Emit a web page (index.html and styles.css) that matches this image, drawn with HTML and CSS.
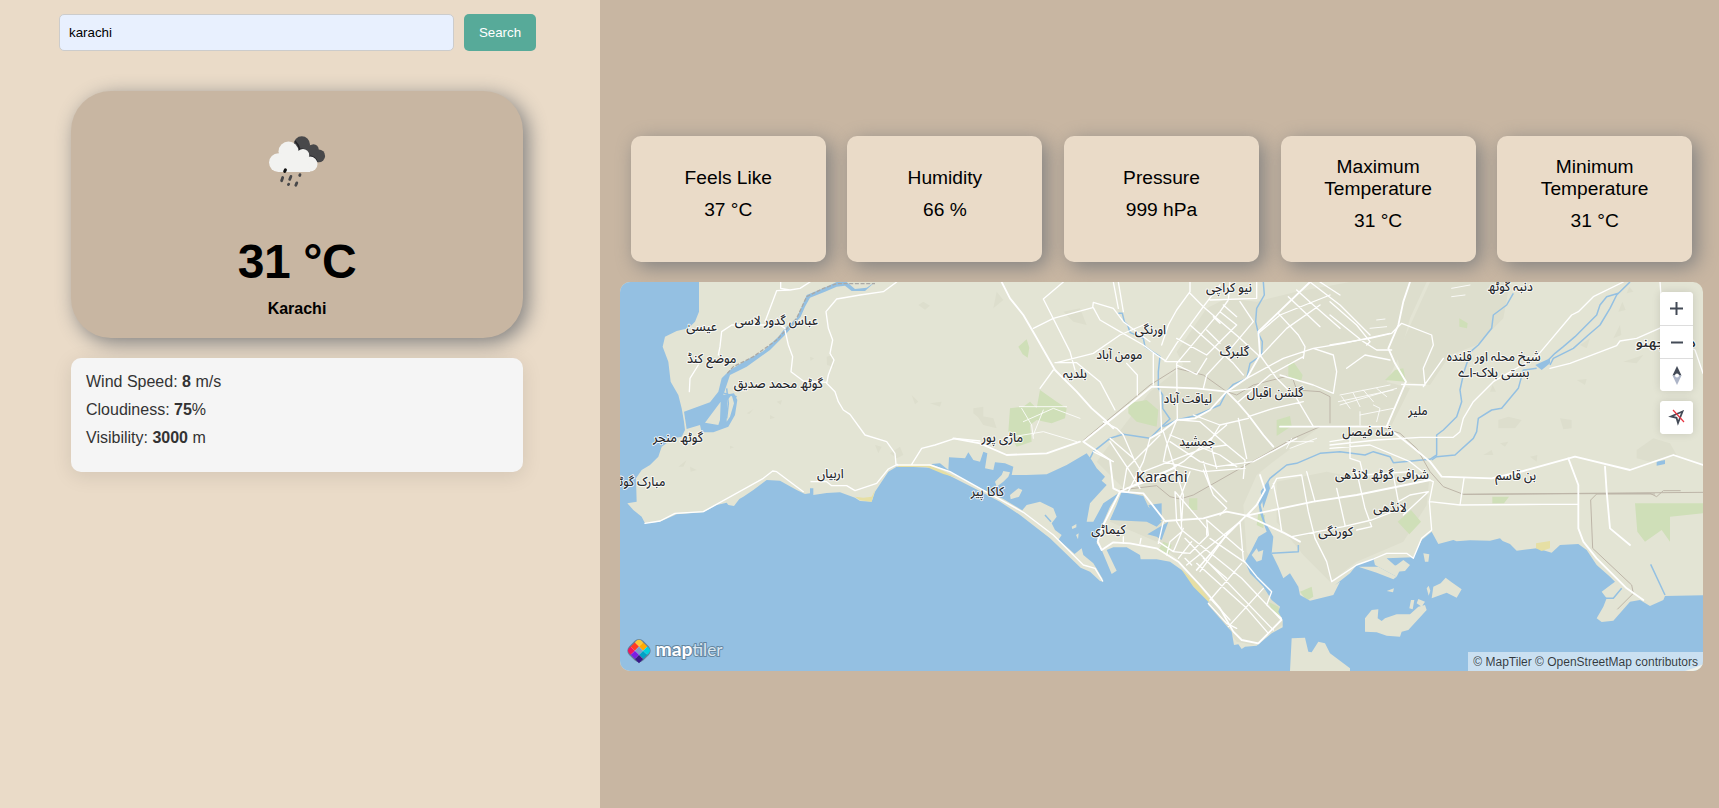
FILE: index.html
```html
<!DOCTYPE html>
<html lang="en">
<head>
<meta charset="utf-8">
<title>Weather</title>
<link rel="stylesheet" href="styles.css">
</head>
<body>
<div class="app">
  <aside class="sidebar">
    <form class="search">
      <input class="search-input" type="text" value="karachi">
      <button class="search-button" type="button">Search</button>
    </form>
    <section class="current">
      <svg class="weather-icon" viewBox="0 0 100 100">
        <g fill="#48484a"><circle cx="54.800" cy="33.500" r="8.200"/><circle cx="66.500" cy="38.500" r="5.200"/><circle cx="71.700" cy="44.900" r="6.400"/><path d="M50 35L68 34L72 51.300L60 48Z"/></g>
        <path d="M48 30Q52 34 52.800 38.500Q60 37 62 45Q68 45.500 70 50.500" fill="none" stroke="#222226" stroke-width="1.400"/>
        <g fill="#f2f2f0"><circle cx="41.500" cy="40.500" r="10"/><circle cx="31.300" cy="51.600" r="9.300"/><circle cx="56" cy="44.200" r="6.200"/><circle cx="63" cy="53" r="7.500"/><path d="M31 60.900V48L40 40H52L60 48L63 60.500V60.900Z"/></g>
        <path d="M38.400 58.900l-.700 1.500" stroke="#111" stroke-width="3" stroke-linecap="round"/>
        <path d="M35.700 66.500l-1.100 3.200M43.900 65.400l-1.200 3M53 63.600l-.3.900M41.700 73.100l-.3.500M49.800 71.900l-1 2.300" stroke="#48484a" stroke-width="2.800" stroke-linecap="round"/>
      </svg>
      <h1 class="temperature">31 °C</h1>
      <p class="city">Karachi</p>
    </section>
    <section class="details">
      <p>Wind Speed: <b>8</b> m/s</p>
      <p>Cloudiness: <b>75</b>%</p>
      <p>Visibility: <b>3000</b> m</p>
    </section>
  </aside>
  <main class="content">
    <div class="stats">
      <div class="stat"><h3>Feels Like</h3><p>37 °C</p></div>
      <div class="stat"><h3>Humidity</h3><p>66 %</p></div>
      <div class="stat"><h3>Pressure</h3><p>999 hPa</p></div>
      <div class="stat"><h3>Maximum Temperature</h3><p>31 °C</p></div>
      <div class="stat"><h3>Minimum Temperature</h3><p>31 °C</p></div>
    </div>
    <div class="map">
      <svg class="map-canvas" viewBox="30 21 3249 1167">
        <!-- built-up areas -->
        <g class="urban">
          <path d="M1520 480L1620 350L1720 270L1700 230L1790 100L1850 70L1940 80L2060 50L2220 21H2450L2400 130L2370 240L2330 320L2400 340L2330 480L2250 450L2130 455L1990 560L1940 600L1900 690L1910 830L2010 1000L2018 1050L1930 1110L1880 1100L1790 980L1700 850L1640 800L1500 740L1540 640L1460 560Z"/>
          <path d="M2460 21H2700L2680 130L2600 210L2520 240L2460 330L2380 320L2360 240Z"/>
          <path d="M2000 620L2150 590L2250 610L2460 590L2450 690L2380 800L2240 860L2160 920L2080 840L2000 740Z"/>
          <path d="M1160 50L1180 75L1150 100ZM925 90l15-10 20 12-15 12zM905 360l20 20-10 8zM960 385l35-5-5 15zM1090 400l30-5v45l-30-25zM795 510l20 5-10 20zM840 535l30-20 10 25-20 10zM650 245l18-5 3 35-20-5zM600 245l12 5-10 8zM205 575l25-20-10 20zM240 575l20 10-18 5zM410 415l20-12-12 14zM480 420l15 8-15 4zM500 380l16-5-4 14zM360 512l12 5-12 4zM1100 420l50 10 10 30-40-10zM1360 110l50-10 20 50-40-10z"/>
          <path d="M2665 435l30-10 40 10-20 25-50 0zM2850 430l35 5v25l-25 3zM2900 315l30-3-5 18zM3080 525l50-35 50 15 20 35-80 20-40-10zM2620 540l25-15 5 15zM2670 505l25-5-10 15zM2760 545l22-5-2 20zM3050 55l8-20 12 15zM3025 110l12-30 10 25zM3010 190l20-40 4 30zM2910 210l30-20-10 30zM3040 260l60-20-20 25zM2640 350l8-20 10 20z"/>
        </g>
        <!-- parks -->
        <g class="park">
          <path d="M1200 400L1240 395L1260 380L1280 400L1290 345L1340 380L1370 400L1365 430L1325 445L1280 435L1260 450L1265 500L1220 515L1195 470ZM1225 215l25-22 8 25-5 30-15-10zM1555 385l55-10 35 30-5 50-60-15-25-25zM2035 265l15-5 28 40-5 20-38-10zM2000 435l40-12 5 30-45 30zM2325 315l30-30 25-5 8 40zM2548 130l25 15-2 15-23-5zM1737 670h25v35h-25zM1660 800l25 10-10 30-30-15zM1945 715l20 5-5 40-20-10zM2070 950l35-15 5 30-20 12zM1975 980l30 15 8 30-25-15z"/>
          <path d="M2363 740l40-35 30 35-35 38zM2647 665h50l-15 20h-35zM3075 685H3279V715L3180 725V800L3155 765L3105 800L3082 770Z"/>
        </g>
        <path class="sea" d="M30 21H267V110L255 140L235 160L200 168L165 185L158 215L175 260L182 320L205 360L215 400L222 440L225 465L215 485L190 490L155 515L145 545L120 570L95 585L78 610L80 680L52 685L70 705L95 725L105 745L150 740L200 718L280 712L320 690L350 683L355 690L372 693L388 672L400 665L430 645L470 615L510 617L560 645L585 657L600 655V640L610 640V660L650 654L690 652L735 668L750 678L785 680L795 650L815 620L835 590L860 575L960 575L965 567L990 565L1015 585L1017 547L1065 550L1075 532L1090 555L1110 560L1120 530L1132 535L1125 580L1150 585L1155 562L1185 565L1210 575L1205 600L1250 600L1310 598L1370 570L1430 535L1445 555L1460 580L1485 605L1475 617L1490 630L1440 685L1430 740L1450 740L1480 685L1525 655L1500 695L1465 775L1460 805L1475 825L1505 897L1520 887L1490 825L1510 817L1550 817L1590 840L1592 853L1640 853L1680 860L1715 885L1760 930L1795 975V990L1865 1070L1872 1110L1885 1108L1895 1122L1905 1115L1940 1112L1985 1075L2018 1057V1035L2005 1010L2010 995L1985 975L1960 935L1920 895L1905 860L1925 825L1945 785L1970 770L1950 715L1945 685L1960 640L1972 650L1952 690L1965 740L1990 785L1985 835L2005 875L2020 910L2040 895L2065 935L2070 960L2100 977L2170 960L2190 920L2175 930L2220 895L2240 870L2290 850L2295 870L2360 905L2370 885L2330 850L2410 847L2435 795L2465 770L2485 807L2530 795L2540 799L2580 796L2640 797L2670 790L2678 798L2700 807L2720 827L2780 820L2825 833L2850 810L2905 807L2930 825L2960 870L3000 905L3015 920L2975 950L2990 970L2980 995L2960 1030L2975 1041L3010 1037L3060 980L3090 975L3120 993L3160 975L3165 963L3279 961V1188H30Z"/>
        <g class="sea">
          <path d="M222 410L300 382L325 350L335 310L360 285L410 255L460 228L505 185L525 160L560 130L575 95L590 60L640 40L680 21L710 21L735 42L770 38L795 21L765 48L725 48L705 32L680 35L645 50L600 68L585 95L572 125L530 175L480 225L410 275L360 300L350 330L340 360L372 355L382 375L375 420L355 455L310 472L275 472L270 450L230 462Z"/>
          <path d="M1535 650L1600 663L1615 695L1655 740L1640 755L1610 740L1500 735L1520 690ZM1615 690L1655 685V735L1635 735ZM1612 778L1675 740L1655 795L1640 785Z"/>
          <path d="M2776 270L2820 250V265L2795 285ZM3140 560l25-5v12l-25 5zM1952 650L1975 620L1980 640L1960 700Z"/>
        </g>
        <!-- islands and the coastal spit -->
        <g class="land">
          <path d="M332 380L330 435L325 450L285 443ZM352 375L365 360L372 385L360 425L350 440Z"/>
          <path d="M860 566H960L1020 590L1110 640L1180 672L1240 708L1330 780L1420 860L1458 878L1480 920L1470 918L1440 890L1412 878L1320 790L1230 720L1170 680L1090 638L1010 598L960 578L860 574Z"/>
          <path d="M1235 708L1250 690L1290 680L1330 700L1340 725L1325 745L1335 765L1355 780L1345 795L1300 765ZM1390 840L1415 820L1420 840L1450 865L1480 915L1440 880ZM1155 620L1175 600L1180 588L1200 592L1195 605L1180 620L1160 635ZM1200 660l25-20 12 5-10 20-25 8zM1385 755l14-8v10l-12 5zM1398 780l8-5-2 18zM1235 588l30-3h35l-20 5z"/>
          <path d="M1925 840l15-20 5 10 15-5-5 30-15 5zM2040 1188L2045 1090L2085 1088L2095 1130L2105 1132L2125 1100L2145 1105L2160 1135L2220 1180V1188Z"/>
          <path d="M2265 1070V1030L2285 1005L2305 1003L2303 1030L2315 1038L2325 1030L2360 1018H2400L2425 995L2445 990L2450 1005L2395 1065L2375 1070L2370 1085L2330 1082L2300 1072ZM2398 1000l5-25 10 0-5 28zM2420 985l5-13 20 8-10 15zM2465 970l5-35 22-10 15-17 20 15 28 20-15 25-30-15zM2450 940l6-8 5 15-5 15zM2335 880l25-10 20-15 20 15-15 18-25 2zM2330 948l22-8-3 12zM2440 835l18 3-3 22-10 0zM2245 875l60 0 55 30-10 8-50-20zM3225 1188l25-8 29-12v20z"/>
        </g>
        <path class="sand" d="M735 665L750 676L785 680L795 645L785 665L760 668ZM865 568H950L1000 588L1040 608L1000 597L950 576H865ZM1712 880L1760 925L1800 975L1795 980L1750 935ZM2778 805L2820 798V820L2795 828L2778 820Z"/>
        <g class="stream">
          <path d="M1525 115L1537 115L1543 140L1553 150L1560 172L1600 190L1605 215L1650 245L1645 290V340L1658 360V400L1680 432L1660 450L1620 490L1540 478L1500 490L1450 530L1440 550"/>
          <path d="M1960 21L1963 60L1940 100L1937 140L1945 175L1957 200L1955 240L1920 265L1910 310L1870 328L1850 350L1830 390L1755 422L1700 435L1660 455"/>
          <path d="M2710 55L2690 90L2650 120L2645 160L2605 210L2582 230L2562 290L2550 345L2555 380L2540 425L2500 465L2480 480L2480 540L2460 553L2350 563L2340 545L2290 530L2265 540L2190 530L2130 535L2060 565L2030 570L1980 610L1955 650"/>
          <path d="M3060 21L3020 60L3000 100L2970 150L2935 180L2890 220L2830 250L2820 270M3025 55L2990 65L2970 90L2960 120L2930 150L2895 185L2860 215L2835 235L2815 255M2780 280L2740 285L2725 340L2700 370L2675 400L2645 405L2605 430L2600 470L2590 490L2535 540L2480 545L2465 555"/>
          <path d="M3122 868L3165 960M3035 940L3010 970H2980M1985 835L2065 830V810M1305 720l18 20M350 340L355 385L350 430M342 355L380 365"/>
        </g>
        <g class="rail">
          <path d="M1420 496L1620 330L1700 280L1780 300L1850 350L1880 360L1930 330L2030 304L2050 315L2060 345L2130 350L2160 365V445M2050 490L1900 575L1750 660L1710 672L1680 665L1640 632L1530 645M2050 490L2130 455L2310 455L2370 475L2420 520L2460 590L2500 635L2560 658L3120 655L3140 665L3160 647H3212M2560 658L3279 652M3135 657H2960L2942 675L2948 820L3065 930L3070 955L3022 1003"/>
        </g>
        <path class="border" d="M352 295L370 275L430 245L500 195L560 130L590 65L640 40L680 26H795"/>
        <!-- main roads -->
        <g class="road major">
          <path d="M1175 21L1200 70L1240 120L1275 180L1335 285L1400 350L1445 400L1485 435L1510 460"/>
          <path d="M1420 500L1625 335L1760 340L1850 350L1885 385L1915 420L1960 480L1990 515M1420 500L1500 555L1510 640L1530 650L1600 655L1665 738L1780 730L1850 710L1910 722L2025 775L2070 800"/>
          <path d="M2100 21L1945 170L1950 240L1910 310L1850 350L1800 405L1755 430L1700 435L1655 470L1620 490M1530 650L1475 760L1463 800L1475 825L1510 802L1560 805L1640 820L1705 860L1770 930L1830 1000L1870 1070L1895 1095L1945 1105L2014 1035M2010 455L2110 455L2330 455L2400 510L2460 560L2495 605L2645 610L2740 588L2895 545L3060 585L3190 540L3279 570"/>
          <path d="M2400 21L2380 80L2365 150L2335 220L2355 265L2388 320L2330 455M2875 550L2905 630L2905 760L2920 800L2960 850L3050 940L3100 975M2985 575L2990 650L3000 760L3060 810M1410 500L1310 535L1190 540L1110 505L1030 490"/>
          <path d="M1905 725L1850 780L1760 885M1910 722L2110 680L2240 660L2460 615M1950 600L1965 645L1940 690L1910 722M1530 650L1640 600L1690 580L1700 570"/>
        </g>
        <g class="road">
          <path d="M860 570H960L1020 590L1110 640L1240 712L1330 780L1420 870L1455 880L1478 918M905 568L935 520L975 510L1035 490L1110 498M858 568L855 535L830 500L765 480L720 418L700 405L685 380L675 350L650 325L655 300L672 255L660 235L668 195L655 160L648 110L680 72L750 60L820 50L860 21M862 568L835 582L800 625L735 647L710 632H665L650 620L603 620M580 650L500 590L488 588L460 610L280 710L195 715L150 738L105 745M525 165L535 210L548 245L543 290L580 318L650 322M525 160L510 150H365L335 170L330 215L325 240M265 270L240 310L238 350M600 21L570 40L540 45L500 47L465 140M512 21V40L540 45"/>
          <path d="M1360 21L1300 72L1380 230L1395 285M1270 160L1330 130L1448 98L1450 82L1510 100L1540 140L1620 200M1450 98L1470 135L1530 170L1600 210L1640 240L1670 260L1740 260M1340 263L1450 235L1530 180L1600 150M1510 21L1525 100M1525 21L1540 110M1330 285L1290 340M1335 263H1400L1470 320L1515 405M1480 440L1520 460L1540 480M1550 265L1582 300V360M1630 235V330M1650 345L1655 470M1700 265L1702 435M1740 21V50L1700 105L1675 150L1655 210M1740 55L1780 95L1830 30M1780 95L1700 205L1665 260M1780 95L1890 190L1950 245M1860 21L1855 75L1830 110L1700 265M1940 21V70L1800 75M1890 80L1930 140L1850 235L1790 300L1780 340M1830 110L1880 150L1790 240L1700 190M1740 150L1870 265L1900 300M1810 125L1830 145M1840 90L1880 125M1790 165L1830 205M1700 270L1760 298L1790 250"/>
          <path d="M2005 115L2065 180L2085 215L2080 250M2035 65L2130 155M2060 45L2110 90L2190 160M2100 21L2190 90L2280 180M2130 21L2190 60M1945 175L2010 120L2160 60M1950 245L2030 160L2130 90M1910 310L2020 250L2110 220L2200 205L2340 175M1885 380L1980 300L2080 245M1950 240L2000 310L2060 370L2110 455M2010 300L2110 330L2170 355L2180 290L2170 240L2110 220M1915 425L1990 400L2080 380M1850 350L1930 340M1710 435L1770 440L1850 510L1905 555L1900 610M1750 420L1830 450L1915 430M1830 450L1800 500L1820 580M1885 430L1910 550M1700 435L1670 510L1660 560M1660 470L1720 660L1715 740M1650 480L1550 580L1540 640M1620 490L1600 560L1555 650M1540 480L1575 560M1500 500L1560 590L1590 640M1450 530L1510 560M1500 490L1570 550L1600 600M1680 480L1830 540L1880 575M1680 500L1770 560L1820 575L1930 560L2060 490M1660 560L1780 590L1905 580M1780 560L1800 630L1850 680M1600 590L1780 520L1850 510M1620 620L1720 560L1850 450M1550 640L1700 590M1740 590L1710 670L1715 760M1780 585L1810 660L1850 700L1830 720"/>
          <path d="M1715 765L1700 740L1695 650L1730 690L1790 760V780M1715 765L1895 910L2014 1035M1725 790L1990 1065M1790 735L1900 830M1890 740L1900 855L1940 905L1985 950L1970 990L2014 1030M1890 740L1730 870M1860 765L1770 890M1895 865L1800 975M1960 940L1855 1055M1790 735L1795 780L1740 835L1690 830L1645 800M1720 760L1690 830M1715 770L1680 800L1670 840M1745 800L1705 850M1760 865L1910 1000L1975 1075M1780 850L1850 910M1795 985L1850 1045L1880 1060M1805 975L1860 1035M1540 785V805M1593 790L1590 805M1660 740L1645 805M1905 862L1800 790M1725 850L1745 870"/>
          <path d="M1985 640L2000 610L2075 600L2095 710L2115 790M1990 625L2005 700L2015 770M2045 785L2200 755L2285 735L2375 700M2115 680L2090 590M2115 790L2150 860L2165 920L2240 870L2290 852L2330 835L2390 835L2410 850L2435 790L2465 765L2458 680L2470 620M2460 680L2550 690L2800 688H2905M2550 690L2562 610M2240 590L2265 700L2285 755L2240 765M2180 640L2205 750M2350 600L2365 680L2400 660L2455 650L2380 720M2160 500L2220 490L2220 550L2250 560L2260 600L2400 590L2470 620M2160 520L2280 510L2400 560L2450 600M2160 510L2300 495L2430 487H2530L2550 470L2560 430L2590 380L2650 320L2780 245L2885 120L2905 110L2950 65L3040 21M2820 280L2880 265L3020 212L3030 198L3080 190L3160 155L3200 150M3200 195L3255 225L3279 295M3150 21L3155 90L3162 155M2160 80L2240 150L2280 200L2270 210M2160 210L2280 190L2345 175L2375 145L2465 180L2470 210L2440 280L2445 330L2375 328M2440 335L2500 250M2160 120L2260 200L2300 225L2345 225M2210 280L2265 240L2340 255"/>
        </g>
        <g class="road minor">
          <path d="M1228 395H1370M1240 440L1330 400L1410 430M1235 400L1265 450L1270 490M1300 405L1270 480M1180 490L1300 470L1400 500M2190 360L2340 330M2185 380L2350 345M2190 390L2360 340M2195 365L2220 400M2230 355L2250 395M2260 345L2290 380M2300 340L2330 365M2250 410L2250 450M2250 420L2350 400M2290 390L2310 400L2300 440M2280 160L2330 155M2300 135L2325 132M2525 40L2580 30M2525 65L2565 60M2030 500L2110 500M2040 520L2120 490M2045 490L2030 520"/>
        </g>
        <!-- place names -->
        <g class="label" direction="rtl">
          <text x="275" y="168" textLength="92" lengthAdjust="spacingAndGlyphs">عیسیٰ</text>
          <text x="499" y="151" textLength="250" lengthAdjust="spacingAndGlyphs">عباس گدور لاسی</text>
          <text x="305" y="264" textLength="148" lengthAdjust="spacingAndGlyphs">موضع کنڈ</text>
          <text x="505" y="340" textLength="268" lengthAdjust="spacingAndGlyphs">گوٹھ محمد صدیق</text>
          <text x="204" y="502" textLength="150" lengthAdjust="spacingAndGlyphs">گوٹھ منجر</text>
          <text x="86" y="634" textLength="160" lengthAdjust="spacingAndGlyphs">مبارک گوٹھ</text>
          <text x="661" y="608" textLength="80" lengthAdjust="spacingAndGlyphs">اربیاں</text>
          <text x="1857" y="52" textLength="138" lengthAdjust="spacingAndGlyphs">نیو کراچی</text>
          <text x="1621" y="178" textLength="94" lengthAdjust="spacingAndGlyphs">اورنگی</text>
          <text x="1528" y="253" textLength="138" lengthAdjust="spacingAndGlyphs">مومن آباد</text>
          <text x="1873" y="242" textLength="88" lengthAdjust="spacingAndGlyphs">گلبرگ</text>
          <text x="1395" y="310" textLength="72" lengthAdjust="spacingAndGlyphs">بلدیہ</text>
          <text x="1733" y="385" textLength="145" lengthAdjust="spacingAndGlyphs">لیاقت آباد</text>
          <text x="1995" y="367" textLength="170" lengthAdjust="spacingAndGlyphs">گلشن اقبال</text>
          <text x="1177" y="500" textLength="125" lengthAdjust="spacingAndGlyphs">ماڑی پور</text>
          <text x="1761" y="513" textLength="107" lengthAdjust="spacingAndGlyphs">جمشید</text>
          <text x="1132" y="662" textLength="100" lengthAdjust="spacingAndGlyphs">کاکا پیر</text>
          <text x="1495" y="777" textLength="103" lengthAdjust="spacingAndGlyphs">کیماڑی</text>
          <text x="2177" y="782" textLength="105" lengthAdjust="spacingAndGlyphs">کورنگی</text>
          <text x="2701" y="49" textLength="135" lengthAdjust="spacingAndGlyphs">دنبہ گوٹھ</text>
          <text x="2651" y="258" textLength="282" lengthAdjust="spacingAndGlyphs">شیخ محلہ اور قلندہ</text>
          <text x="2651" y="307" textLength="214" lengthAdjust="spacingAndGlyphs">بستی بلاک-اے</text>
          <text x="2424" y="421" textLength="58" lengthAdjust="spacingAndGlyphs">ملیر</text>
          <text x="2274" y="483" textLength="155" lengthAdjust="spacingAndGlyphs">شاہ فیصل</text>
          <text x="2316" y="613" textLength="282" lengthAdjust="spacingAndGlyphs">شرافی گوٹھ لانڈھی</text>
          <text x="2717" y="615" textLength="123" lengthAdjust="spacingAndGlyphs">بن قاسم</text>
          <text x="3167" y="217" textLength="180" lengthAdjust="spacingAndGlyphs">داؤد چھنو</text>
          <text x="2340" y="711" textLength="100" lengthAdjust="spacingAndGlyphs">لانڈھی</text>
        </g>
        <text class="label city-label" x="1655" y="621" textLength="155" lengthAdjust="spacingAndGlyphs">Karachi</text>
      </svg>
      <div class="map-controls">
        <div class="control-group">
          <button type="button" aria-label="Zoom in"><svg viewBox="0 0 33 33"><path d="M16.500 10v13M10 16.500h13" stroke="#434a56" stroke-width="2"/></svg></button>
          <button type="button" aria-label="Zoom out"><svg viewBox="0 0 33 33"><path d="M11 16.500h12" stroke="#434a56" stroke-width="2"/></svg></button>
          <button type="button" aria-label="Reset north"><svg viewBox="0 0 33 33"><path d="M17 7L21.500 16.500H12.500Z" fill="#434a56"/><path d="M12.500 16.500h9L17 26Z" fill="#adb5c8"/><circle cx="17" cy="16.500" r="2" fill="#fff"/></svg></button>
        </div>
        <div class="control-group">
          <button type="button" aria-label="Location"><svg viewBox="0 0 33 33"><path d="M22.500 10.500L11 15.500L16.500 16.800L18 22Z" fill="none" stroke="#434a56" stroke-width="1.800"/><path d="M13 9L24 21" stroke="#e8333f" stroke-width="1.200"/></svg></button>
        </div>
      </div>
      <svg class="map-logo" viewBox="0 0 110 34">
        <g transform="translate(19 16.700)">
          <g transform="rotate(45)">
            <rect x="-9" y="-9" width="18" height="18" rx="5" fill="#fff" stroke="#64809a" stroke-width="2"/>
            <path d="M-8.800-2.900V-4.800Q-8.800-8.800-4.800-8.800H-2.900V-2.900Z" fill="#fbc935"/>
            <path d="M-2.900-8.800H2.900V-2.900H-2.900Z" fill="#ffaa01"/>
            <path d="M2.900-8.800H4.800Q8.800-8.800 8.800-4.800V-2.900H2.900Z" fill="#00d0dd"/>
            <path d="M-8.800-2.900H-2.900V2.900H-8.800Z" fill="#ff3c20"/>
            <path d="M-2.900-2.900H2.900V2.900H-2.900Z" fill="#7c9ec9"/>
            <path d="M2.900-2.900H8.800V2.900H2.900Z" fill="#00a1c5"/>
            <path d="M-8.800 2.900H-2.900V8.800H-4.800Q-8.800 8.800-8.800 4.800Z" fill="#f1175d"/>
            <path d="M-2.900 2.900H2.900V8.800H-2.900Z" fill="#7a1fe2"/>
            <path d="M2.900 2.900H8.800V8.800H2.900Z" fill="#3a1888"/>
          </g>
        </g>
        <text class="logo-text" x="35.500" y="22"><tspan class="logo-strong" textLength="37" lengthAdjust="spacingAndGlyphs">map</tspan><tspan class="logo-light" textLength="30" lengthAdjust="spacingAndGlyphs">tiler</tspan></text>
      </svg>
      <div class="attribution">© MapTiler © OpenStreetMap contributors</div>
    </div>
  </main>
</div>
</body>
</html>
```
FILE: styles.css
```css
* { box-sizing: border-box; margin: 0; padding: 0; }
body { font-family: "Liberation Sans", Arial, sans-serif; color: #000; }
.app { display: flex; width: 1719px; height: 808px; overflow: hidden; }

.sidebar { width: 600px; background: #eadbc8; padding: 14px 0 0 59px; }
.search { display: flex; gap: 10px; height: 37px; }
.search-input {
  width: 395px; padding: 0 9px; border: 1px solid #ccc; border-radius: 5px;
  background: #e8f0fe; font: 13.333px "Liberation Sans", Arial, sans-serif; color: #000;
}
.search-button {
  width: 72px; border: 0; border-radius: 5px; background: #57aa99; color: #fff;
  font: 13.333px "Liberation Sans", Arial, sans-serif;
}
.current {
  display: flex; flex-direction: column; align-items: center;
  width: 452px; height: 247px; margin: 40px 0 0 12px; padding-top: 20px;
  border-radius: 40px; background: #c8b6a2; box-shadow: 5px 5px 20px grey;
}
.weather-icon { width: 100px; height: 100px; flex: none; }
.temperature { margin-top: 23px; font-size: 48px; line-height: 55px; letter-spacing: -.4px; }
.city { margin-top: 11px; font-size: 16px; line-height: 18px; font-weight: bold; }
.details {
  width: 452px; height: 114px; margin: 20px 0 0 12px; padding: 15px;
  border-radius: 10px; background: #f5f5f5; color: #333; font-size: 16px; line-height: 18px;
  box-shadow: 0 4px 20px rgba(0, 0, 0, .1);
}
.details p { margin-bottom: 10px; }

.content { width: 1119px; background: #c8b6a2; padding: 136px 16px 0 20px; }
.stats { display: flex; height: 126px; }
.stat {
  display: flex; flex-direction: column; justify-content: center;
  width: 18%; margin: 0 1%; padding: 20px; border-radius: 10px;
  background: #eadbc8; box-shadow: 5px 5px 20px grey; text-align: center;
  font-size: 19.2px; line-height: 22px;
}
.stat h3 { font-size: inherit; font-weight: normal; margin-bottom: 10px; }
.stat p { margin-bottom: 10px; }

.map { position: relative; height: 389px; margin-top: 20px; border-radius: 10px; overflow: hidden; background: #e3e4d4; }
.map-canvas { display: block; width: 1083px; height: 389px; }
.urban { fill: #dddecd; }
.park { fill: #cfdfb8; }
.sea { fill: #94c0e2; }
.land { fill: #e3e4d4; }
.sand { fill: #e6dfa4; }
.stream { fill: none; stroke: #94c0e2; stroke-width: 4.500; stroke-linejoin: round; }
.rail { fill: none; stroke: #bdb5a8; stroke-width: 3; stroke-linejoin: round; }
.border { fill: none; stroke: #aaa9a6; stroke-width: 4; stroke-dasharray: 12 5; }
.road { fill: none; stroke: #fff; stroke-width: 4; stroke-linejoin: round; stroke-linecap: round; }
.major { stroke-width: 5.500; }
.minor { stroke-width: 2.500; }
.label {
  font-family: "Noto Sans", "Noto Sans Arabic", "DejaVu Sans", sans-serif; font-size: 39px; font-weight: 500; text-anchor: middle;
  fill: #26282c; stroke: rgba(255, 255, 255, .85); stroke-width: 6; stroke-linejoin: round; paint-order: stroke;
}
.city-label { font-size: 44px; font-weight: 400; }

.map-controls { position: absolute; top: 10px; right: 10px; display: grid; gap: 10px; }
.control-group { width: 33px; border-radius: 4px; overflow: hidden; background: #fff; box-shadow: 0 0 8px rgba(0, 0, 0, .12); }
.control-group button { display: block; width: 33px; height: 33px; border: 0; background: #fff; }
.control-group button + button { border-top: 1px solid #ddd; }
.control-group svg { display: block; width: 33px; height: 33px; }
.map-logo { position: absolute; left: 0; bottom: 3px; width: 110px; height: 34px; }
.logo-text { font-family: Lato, "Open Sans", sans-serif; font-size: 18px; fill: #fff; stroke: #64859f; stroke-width: 2; paint-order: stroke; }
.logo-strong { font-weight: 700; }
.logo-light { font-weight: 400; fill: #d8e6f0; }
.attribution {
  position: absolute; right: 0; bottom: 0; height: 19px; padding: 0 5px;
  background: rgba(255, 255, 255, .5); color: rgba(0, 0, 0, .75); font-size: 12px; line-height: 20px;
}
```
